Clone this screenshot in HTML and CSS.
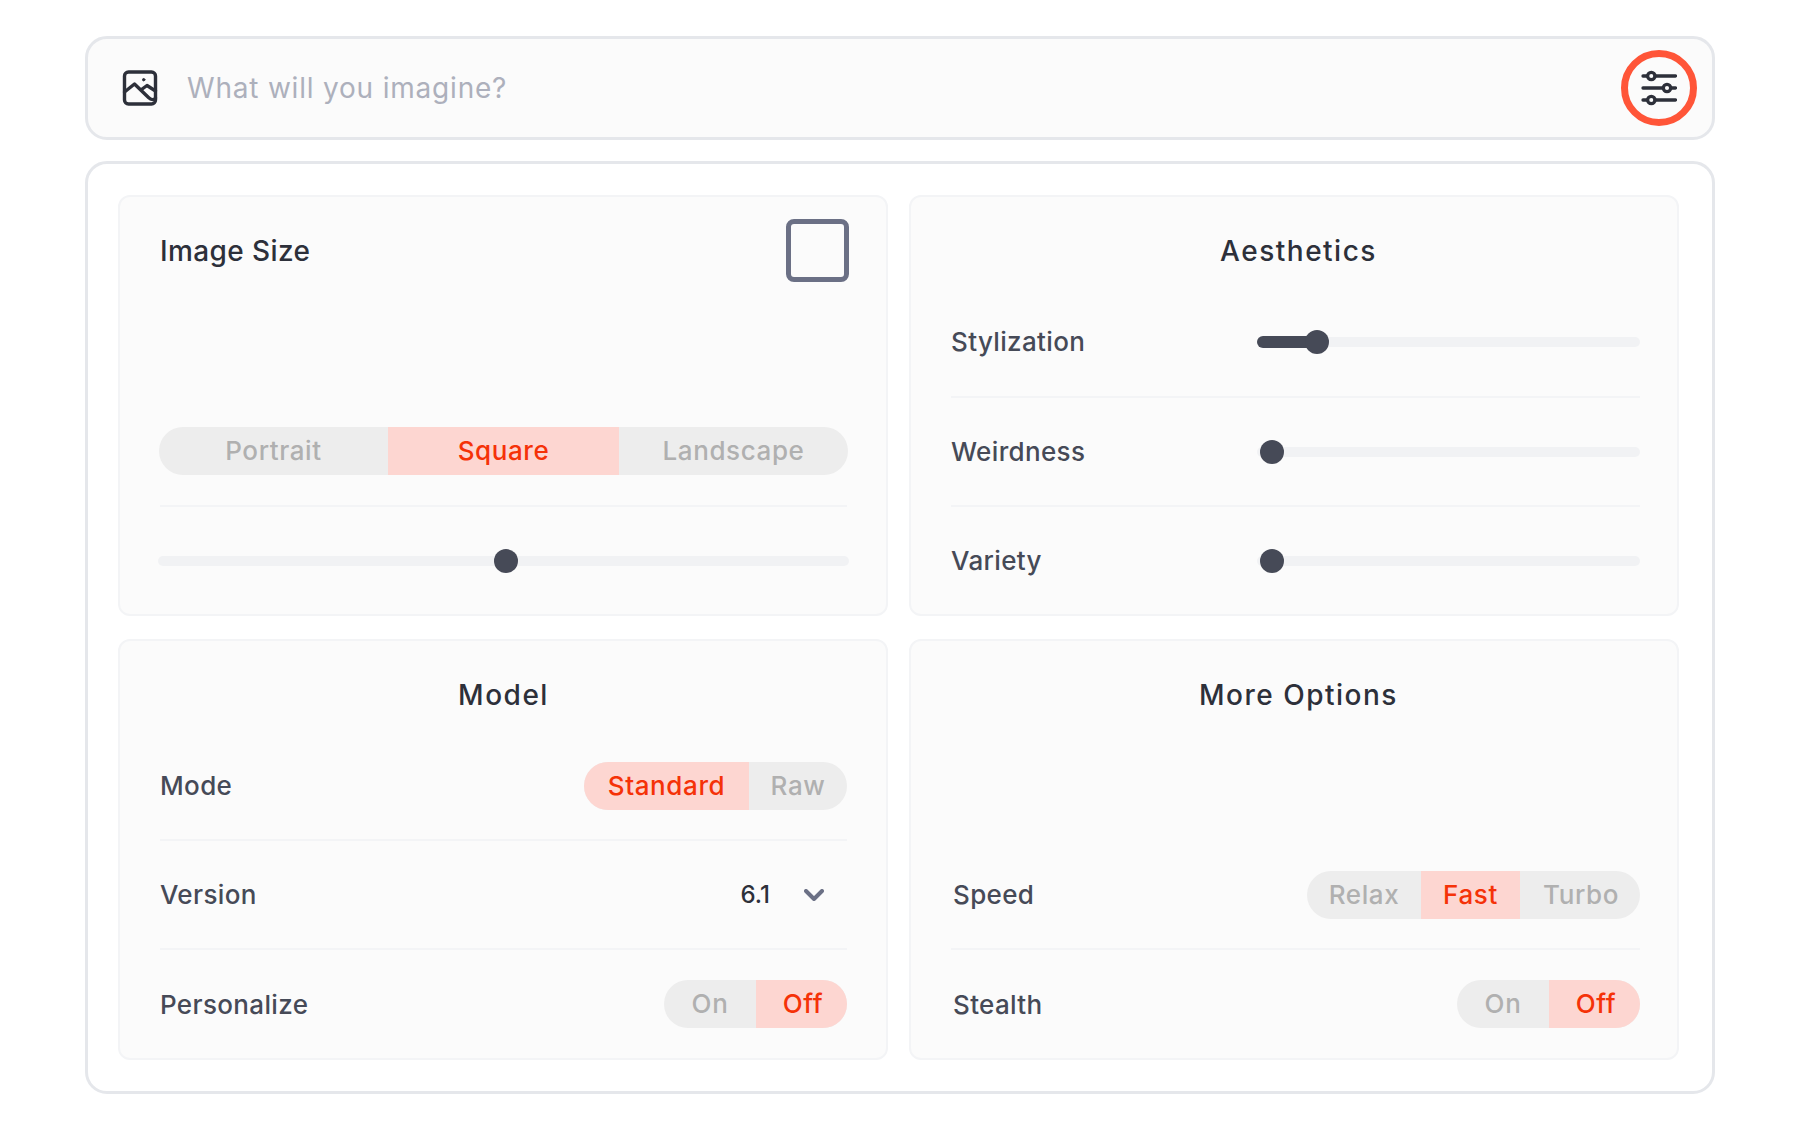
FILE: index.html
```html
<!DOCTYPE html>
<html lang="en">
<head>
  <meta charset="UTF-8">
  <title>Imagine</title>
  <link rel="stylesheet" href="styles.css">
</head>
<body>

  <div class="wrap">
    <div class="prompt">
      <svg class="icon-image" width="36" height="36" viewBox="0 0 36 36" fill="none" stroke="#2d303a" stroke-width="3.4" stroke-linecap="round" stroke-linejoin="round">
        <rect x="2.5" y="2" width="31" height="32" rx="4"/>
        <path d="M2.5 22 L12.5 14 L26.5 27.5 C29 30 32.5 30.5 33.5 28"/>
        <path d="M19.5 19.5 L25 15.5 L33.5 21"/>
        <circle cx="21.7" cy="9.7" r="1.2" fill="#2d303a" stroke-width="1"/>
      </svg>
      <span class="placeholder">What will you imagine?</span>
      <div class="settings">
        <svg width="36" height="36" viewBox="0 0 36 36" fill="none" stroke="#2d303a" stroke-width="3.3" stroke-linecap="round">
          <path d="M2 6H6.5M14 6H34.5"/>
          <circle cx="10.3" cy="6" r="3.7"/>
          <path d="M2 18H22M30 18H34.5"/>
          <circle cx="26" cy="18" r="3.7"/>
          <path d="M2 30H6.5M14 30H34.5"/>
          <circle cx="10.3" cy="30" r="3.7"/>
        </svg>
      </div>
    </div>

    <div class="panel">
      <section class="card">
        <div class="card-head between">
          <h2 class="title-left">Image Size</h2>
          <div class="ratio-box"></div>
        </div>
        <div class="row row-tall blank"></div>
        <div class="row row-seg">
          <div class="seg seg-full">
            <span>Portrait</span>
            <span class="on">Square</span>
            <span>Landscape</span>
          </div>
        </div>
        <div class="row">
          <div class="slider slider-wide">
            <span class="thumb" style="left: 336px"></span>
          </div>
        </div>
      </section>

      <section class="card card-right">
        <div class="card-head">
          <h2>Aesthetics</h2>
        </div>
        <div class="row row-tall">
          <label class="label-up">Stylization</label>
          <div class="slider slider-short">
            <span class="fill" style="width: 60px"></span>
            <span class="thumb" style="left: 48px"></span>
          </div>
        </div>
        <div class="row">
          <label>Weirdness</label>
          <div class="slider slider-short">
            <span class="thumb" style="left: 3px"></span>
          </div>
        </div>
        <div class="row">
          <label>Variety</label>
          <div class="slider slider-short">
            <span class="thumb" style="left: 3px"></span>
          </div>
        </div>
      </section>

      <section class="card">
        <div class="card-head head-model">
          <h2>Model</h2>
        </div>
        <div class="row">
          <label>Mode</label>
          <div class="seg">
            <span class="on w-standard">Standard</span>
            <span class="w-raw">Raw</span>
          </div>
        </div>
        <div class="row">
          <label>Version</label>
          <div class="version">
            <span>6.1</span>
            <svg width="20" height="12" viewBox="0 0 20 12" fill="none" stroke="#6b7085" stroke-width="4" stroke-linecap="round" stroke-linejoin="round">
              <path d="M2 2L10 10L18 2"/>
            </svg>
          </div>
        </div>
        <div class="row">
          <label class="label-down">Personalize</label>
          <div class="seg">
            <span class="w-on">On</span>
            <span class="on w-off">Off</span>
          </div>
        </div>
      </section>

      <section class="card card-right">
        <div class="card-head">
          <h2>More Options</h2>
        </div>
        <div class="row blank"></div>
        <div class="row">
          <label class="label-in">Speed</label>
          <div class="seg">
            <span class="w-relax">Relax</span>
            <span class="on w-fast">Fast</span>
            <span class="w-turbo">Turbo</span>
          </div>
        </div>
        <div class="row">
          <label class="label-in label-down">Stealth</label>
          <div class="seg">
            <span class="w-on">On</span>
            <span class="on w-off">Off</span>
          </div>
        </div>
      </section>
    </div>
  </div>

</body>
</html>
```
FILE: styles.css
```css
body {
  font-family: Inter, 'Noto Sans', sans-serif;
  background: #fff;
  margin: 0;
  padding: 0;
}

.wrap {
  width: 1630px;
  margin-left: 85px;
  padding-top: 36px;
}

.prompt {
  height: 104px;
  box-sizing: border-box;
  background: #fbfbfb;
  border: 3px solid #e5e7eb;
  border-radius: 22px;
  display: flex;
  align-items: center;
  padding: 0 15px 0 34px;
}

.icon-image {
  flex: none;
}

.placeholder {
  font-size: 28px;
  letter-spacing: 0.8px;
  color: #adb0bc;
  margin-left: 29px;
  flex: 1;
}

.settings {
  width: 76px;
  height: 76px;
  box-sizing: border-box;
  border: 7px solid #ff5538;
  border-radius: 50%;
  display: flex;
  align-items: center;
  justify-content: center;
}

.panel {
  margin-top: 21px;
  height: 933px;
  box-sizing: border-box;
  border: 3px solid #e5e7eb;
  border-radius: 22px;
  padding: 31px 33px 0 30px;
  display: grid;
  grid-template-columns: 770px 770px;
  grid-template-rows: 421px 421px;
  column-gap: 21px;
  row-gap: 23px;
}

.card {
  box-sizing: border-box;
  background: #fbfbfb;
  border: 2px solid #f3f4f6;
  border-radius: 12px;
  padding: 0 39px 0 40px;
}

.card-right {
  padding: 0 37px 0 40px;
}

.card-head {
  height: 91px;
  box-sizing: border-box;
  padding-top: 16px;
  display: flex;
  align-items: center;
  justify-content: center;
}

.card-right .card-head {
  padding-left: 6px;
}

.card-head.between {
  justify-content: space-between;
}

h2 {
  font-size: 28px;
  font-weight: 450;
  letter-spacing: 1.5px;
  color: #2d303a;
  margin: 0;
}

h2.title-left {
  letter-spacing: 0.4px;
}

.ratio-box {
  width: 63px;
  height: 63px;
  margin-right: -2px;
  box-sizing: border-box;
  border: 5px solid #6b7085;
  border-radius: 8px;
}

.row {
  height: 109px;
  box-sizing: border-box;
  border-bottom: 2px solid #f3f4f6;
  display: flex;
  align-items: center;
  justify-content: space-between;
}

.row-tall {
  height: 110px;
}

.row-seg {
  padding-bottom: 2px;
}

.row.blank,
.row:last-child {
  border-bottom-color: transparent;
}

label {
  font-size: 26px;
  font-weight: 450;
  letter-spacing: 0.35px;
  color: #464a57;
}

.label-in {
  margin-left: 2px;
}

.label-up {
  margin-bottom: 2px;
}

.label-down {
  margin-top: 2px;
}

.seg {
  display: flex;
  height: 48px;
  border-radius: 24px;
  overflow: hidden;
  background: #ededed;
  font-size: 26px;
  font-weight: 450;
  letter-spacing: 0.6px;
  color: #b0b0b0;
}

.seg span {
  display: flex;
  align-items: center;
  justify-content: center;
}

.seg .on {
  background: #fdd6d1;
  color: #f53208;
}

.seg-full {
  flex: 1;
  margin: 0 -1px;
}

.seg-full span {
  flex: 1;
}

.seg-full span.on {
  flex: none;
  width: 231px;
}

.w-standard { width: 165px; }
.w-raw { width: 98px; }
.w-on { width: 92px; }
.w-off { width: 91px; box-sizing: border-box; padding-left: 3px; }
.w-relax { width: 114px; }
.w-fast { width: 99px; }
.w-turbo { width: 120px; box-sizing: border-box; padding-left: 2px; }

.version {
  display: flex;
  align-items: center;
  gap: 34px;
  padding-right: 23px;
  font-size: 24px;
  font-weight: 500;
  color: #2d303a;
}

.slider {
  position: relative;
  width: 100%;
  height: 10px;
  background: #f1f2f4;
  border-radius: 5px;
}

.slider-wide {
  width: auto;
  flex: 1;
  margin: 0 -2px;
}

.slider-short {
  width: 383px;
}

.fill {
  position: absolute;
  left: 0;
  top: -1px;
  height: 12px;
  background: #464a57;
  border-radius: 6px;
}

.thumb {
  position: absolute;
  top: -7px;
  width: 24px;
  height: 24px;
  background: #464a57;
  border-radius: 50%;
}
```
